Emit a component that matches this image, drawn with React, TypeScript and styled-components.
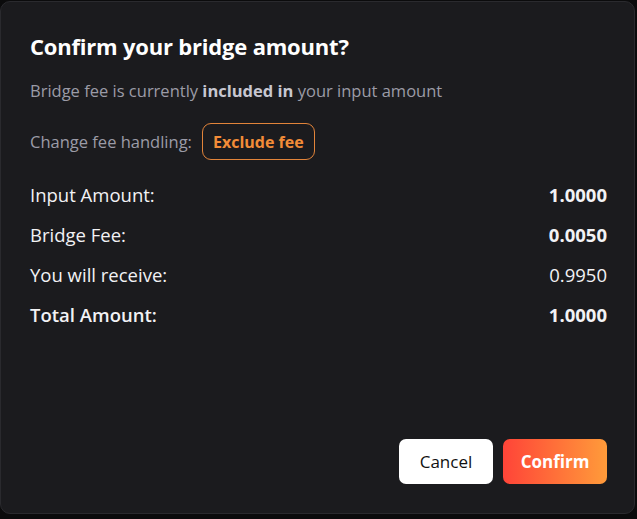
import React, { useState } from 'react';
import styled, { createGlobalStyle } from 'styled-components';

const GlobalStyle = createGlobalStyle`
  html, body {
    margin: 0;
    padding: 0;
    background: #0b0b0c;
    font-family: 'Segoe UI', 'Open Sans', 'Noto Sans', sans-serif;
  }
  * { box-sizing: border-box; }
`;

const Dialog = styled.div`
  width: 635px;
  height: 513px;
  margin: 1px 0 0 0;
  padding: 28px 27px 29px 29px;
  background: #1b1b1e;
  border: 1px solid #2a2a2e;
  border-radius: 10px;
  display: flex;
  flex-direction: column;
`;

const Title = styled.h2`
  margin: 0;
  font-size: 22px;
  line-height: 32px;
  font-weight: 700;
  color: #ffffff;
  letter-spacing: -0.2px;
`;

const Subtitle = styled.p`
  margin: 17px 0 0 0;
  font-size: 16.5px;
  line-height: 24px;
  color: #9b9ba7;

  strong {
    color: #c7c7d1;
    font-weight: 700;
  }
`;

const FeeRow = styled.div`
  display: flex;
  align-items: center;
  gap: 10px;
  margin-top: 20px;
  font-size: 16.5px;
  color: #9b9ba7;
`;

const OutlineButton = styled.button`
  font-family: inherit;
  font-size: 16px;
  font-weight: 700;
  color: #f28c38;
  background: transparent;
  border: 1px solid #e2843a;
  border-radius: 9px;
  height: 37px;
  padding: 0 10px;
  cursor: pointer;
`;

const Summary = styled.div`
  display: flex;
  flex-direction: column;
  margin-top: 14px;
`;

const SummaryRow = styled.div<{ $bold?: boolean }>`
  display: flex;
  justify-content: space-between;
  align-items: center;
  height: 40px;
  font-size: 18.5px;
  color: #f2f2f5;
  font-weight: ${(p) => (p.$bold ? 600 : 400)};
`;

const Value = styled.span<{ $bold?: boolean }>`
  font-weight: ${(p) => (p.$bold ? 700 : 400)};
`;

const Actions = styled.div`
  margin-top: auto;
  display: flex;
  justify-content: flex-end;
  gap: 10px;
`;

const ActionButton = styled.button<{ $primary?: boolean }>`
  font-family: inherit;
  height: 45px;
  padding: 0 16px;
  border-radius: 7px;
  font-size: 17px;
  border: none;
  cursor: pointer;
  background: ${(p) => (p.$primary ? 'linear-gradient(90deg, #ff4438 0%, #ff9b3a 100%)' : '#ffffff')};
  color: ${(p) => (p.$primary ? '#ffffff' : '#111111')};
  font-weight: ${(p) => (p.$primary ? 700 : 500)};
  min-width: ${(p) => (p.$primary ? '104px' : '94px')};
`;

const rows = [
  { label: 'Input Amount:', value: '1.0000', boldValue: true },
  { label: 'Bridge Fee:', value: '0.0050', boldValue: true },
  { label: 'You will receive:', value: '0.9950', boldValue: false },
  { label: 'Total Amount:', value: '1.0000', boldValue: true, boldLabel: true },
];

export default function App() {
  const [excluded, setExcluded] = useState(false);

  return (
    <>
      <GlobalStyle />
      <Dialog>
        <Title>Confirm your bridge amount?</Title>
        <Subtitle>
          Bridge fee is currently <strong>{excluded ? 'excluded from' : 'included in'}</strong> your input amount
        </Subtitle>
        <FeeRow>
          Change fee handling:
          <OutlineButton onClick={() => setExcluded(!excluded)}>
            {excluded ? 'Include fee' : 'Exclude fee'}
          </OutlineButton>
        </FeeRow>
        <Summary>
          {rows.map((r) => (
            <SummaryRow key={r.label} $bold={r.boldLabel}>
              <span>{r.label}</span>
              <Value $bold={r.boldValue}>{r.value}</Value>
            </SummaryRow>
          ))}
        </Summary>
        <Actions>
          <ActionButton>Cancel</ActionButton>
          <ActionButton $primary>Confirm</ActionButton>
        </Actions>
      </Dialog>
    </>
  );
}
